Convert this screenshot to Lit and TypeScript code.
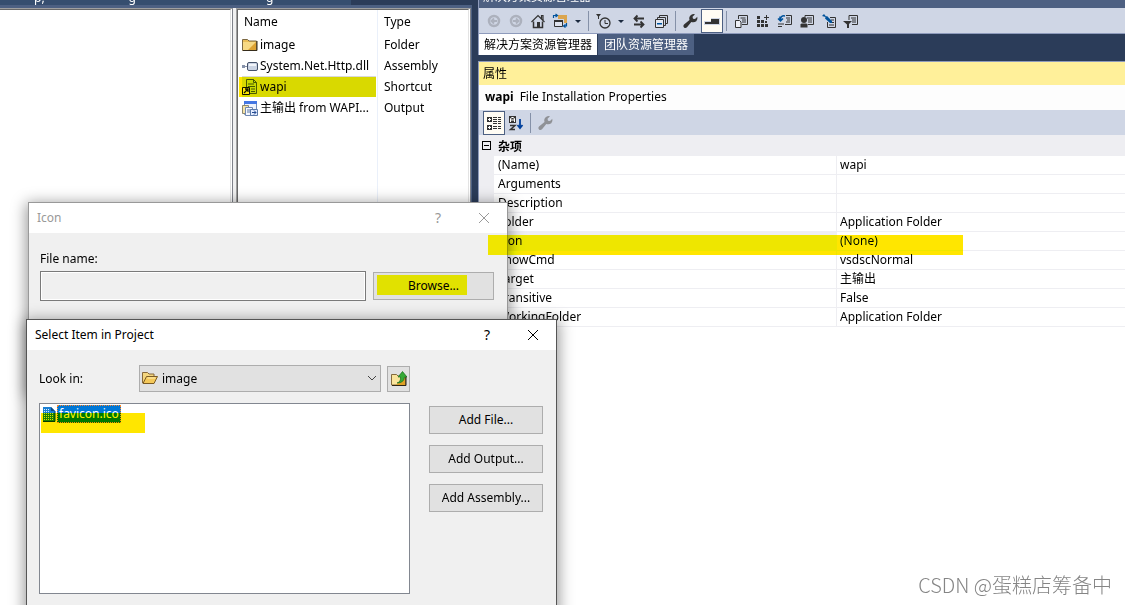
import { LitElement, html, css, svg, nothing, TemplateResult, SVGTemplateResult } from "lit";
import { customElement, property } from "lit/decorators.js";

const glyphs: Record<string, SVGTemplateResult> = {
  back: svg`<circle cx="8" cy="8" r="5" fill="none" stroke="#acb1bd" stroke-width="2.500"/><path d="M11 8H6M8 5.500 5.500 8 8 10.500" fill="none" stroke="#acb1bd" stroke-width="1.800"/>`,
  forward: svg`<circle cx="8" cy="8" r="5" fill="none" stroke="#acb1bd" stroke-width="2.500"/><path d="M5 8h5M8 5.500 10.500 8 8 10.500" fill="none" stroke="#acb1bd" stroke-width="1.800"/>`,
  home: svg`<path d="M1.500 9 8 2.500 14.500 9M11.500 5.500V2.500H13V7" fill="none" stroke="#333" stroke-width="1.200"/><path d="M3.500 8.500V14.500H12.500V8.500" fill="none" stroke="#333" stroke-width="1.500"/><path d="M7 9h3v5H7z" fill="#333"/>`,
  sync: svg`<path d="M6 2h9v8h-3V6H6z" fill="#dba54e"/><path d="M2.500 7.500h8v6h-8z" fill="#dfe3ee" stroke="#333"/><path d="M2 7h9v2H2z" fill="#333"/><path d="M1.500 5V2.500H5M3.500 1l2 1.500-2 1.500M14.500 10v3H12M13.500 11.500l-2 1.500 2 1.500" fill="none" stroke="#00539c" stroke-width="1.200"/>`,
  clock: svg`<circle cx="10" cy="10" r="5" fill="none" stroke="#333" stroke-width="1.300"/><path d="M10 7v3.500h3" fill="none" stroke="#333"/><path d="M1 1h5L4 3.500V6H3V3.500z" fill="#333"/>`,
  swap: svg`<path d="M13 5.500H3.500M6.500 2.500l-3 3 3 3M3 11.500h9.500M9.500 8.500l3 3-3 3" fill="none" stroke="#333" stroke-width="1.800"/>`,
  collapse: svg`<path d="M6.500 5V2.500h8v8H12M4.500 7V4.500h8v8H10" fill="none" stroke="#333"/><path d="M2.500 6.500h8v8h-8z" fill="#e3e7f0" stroke="#333"/><path d="M4 10h5v1.500H4z" fill="#00539c"/>`,
  wrench: svg`<path d="M2 14.500q-1.500-1.500 0-3L7.500 7Q6.500 4 9 2q2-1.500 4-.8L10.500 3.700l.5 2 2 .3 2.300-2.300q.7 2.800-1 4.600Q12 10 9.300 9L5 14.300q-1.500 1.500-3 .2z" fill="currentColor"/>`,
  preview: svg`<path d="M0 8h7V5h9v7H0z" fill="#cfd6e5"/><path d="M1 9h6V6h8v5H7v0H1z" fill="#333"/>`,
  props: svg`<path d="M5.500 6V2.500h9v9H9M7.500 5h5M9 7h4M9 9h4" fill="none" stroke="#333"/><path d="M2.500 7.500h4l1.500 1.500v5.500H2.500z" fill="#eef0f6" stroke="#333"/>`,
  grid: svg`<path d="M2 3h3v3H2zM2 7h3v3H2zM2 11h3v3H2zM6 7h3v3H6zM6 11h3v3H6zM10 11h3v3h-3zM10 8h2v2h-2zM9 4h5v1H9zM11 2h1v5h-1z" fill="#333"/>`,
  undo: svg`<path d="M9 2.500h5.500v9H8M9 5h4M10 7h3M9 9h4" fill="none" stroke="#333"/><path d="M1 11h6M1 13.500h4" stroke="#333"/><path d="M3 3.500V7M1 5.500 3.500 8 6 5.500M3.500 7q0-5 4.500-4" fill="none" stroke="#00539c" stroke-width="1.500"/>`,
  user: svg`<path d="M6 4V2.500h8.500v9H9M8 5h5M9 7h4M9 9h4" fill="none" stroke="#333"/><circle cx="5" cy="7" r="3" fill="#333"/><path d="M1.500 14.500v-3l1-1h5l1 1v3z" fill="#333"/>`,
  dart: svg`<path d="M9 4.500h5.500v10h-8V9M8 12h5M9 9.500h4M10 7h3" fill="none" stroke="#333"/><path d="M1 3l2-2 2 2.500 1-.5 5 5v2H9L4 5.500 4.500 4z" fill="#00539c"/>`,
  filter: svg`<path d="M6 7V2.500h8.500v9H9M8 5h5M9 7h4M9 9h4" fill="none" stroke="#333"/><path d="M0 8h9L6 11v4H4v-3.500z" fill="#333"/>`,
  categories: svg`<path d="M1 2h5v5H1zM1 10h5v5H1z" fill="#333"/><path d="M2 4h3v1H2zM3 3h1v3H3zM2 12h3v1H2zM3 11h1v3H3z" fill="#fff"/><path d="M7 2.500h4M12 2.500h3M7 4.500h4M12 4.500h3M7 6.500h4M12 6.500h3M7 8.500h4M12 8.500h3M7 11.500h4M12 11.500h3M7 13.500h4M12 13.500h3" stroke="#333"/>`,
  sort: svg`<path d="M1 1h7v7H1z" fill="#333"/><path d="M2.500 7V3.500L4 2.500h1l1.500 1V7M2.500 5h4" fill="none" stroke="#fff"/><path d="M2 10.500h5L2.500 14.500H7" fill="none" stroke="#333" stroke-width="1.500"/><path d="M12 4v9M9.500 10l2.500 3 2.500-3" fill="none" stroke="#00409c" stroke-width="1.800"/>`,
  folder: svg`<path d="M.500 2.500h5L7 4h7.500v9.500H.5z" fill="#e9bd57" stroke="#7b6843"/><path d="M1 5h13v8H1z" fill="#f7d984"/><path d="M14 5v8H6z" fill="#dda334"/><path d="M1 13.500h14V4" fill="none" stroke="#362c1b"/>`,
  assembly: svg`<path d="M0 7h3v3H0zM3 8h3v1H3z" fill="#8793ab"/><rect x="5.500" y="4.500" width="10" height="8" rx="1.500" fill="#cbd4e4" stroke="#45526b"/><path d="M7 6h7v2H7z" fill="#f2f5fa"/>`,
  shortcut: svg`<path d="M4.500.500h7l3 3v11h-10z" fill="#c8d8a8" stroke="#4a5b1d"/><path d="M11.500.500v3h3M6 5h6M6 7.500h7M9 10h4M9 12.500h4" fill="none" stroke="#46591c"/><path d="M.500 8.500h7v7h-7z" fill="#fff" stroke="#111"/><path d="M2 14l4-4M3 10h3v3" fill="none" stroke="#111" stroke-width="1.300"/>`,
  output: svg`<path d="M2.500 1.500h12v13h-12z" fill="#eef3fd" stroke="#738ebc"/><path d="M2 1h13v3H2z" fill="#4376e3"/><path d="M.500 5.500h6v8h-6z" fill="#f5e3a7" stroke="#8b8770"/><path d="M3.500 7.500h7v8h-7z" fill="#f5f8ff" stroke="#7088b2"/><path d="M5 10h4M5 12h4" stroke="#58759f"/><path d="M8.500 9.500h7v6h-7z" fill="#e3ecff" stroke="#5a78a8"/><path d="M10 12.500h4M12 10.500l2 2-2 2" fill="none" stroke="#234a91"/>`,
  openFolder: svg`<path d="M.500 13V2.500h5L7 4h5v3" fill="#f4d67f" stroke="#87683a"/><path d="M1 13.500 4.500 6.500H15.500L12 13.500z" fill="#f5c95a" stroke="#7a5a24"/><path d="M5.500 8h8" stroke="#fff0b8"/>`,
  upFolder: svg`<path d="M.500 3.500h5L7 5h7.500v9H.500z" fill="#fae49b" stroke="#846b3d"/><path d="M14 6v8H5z" fill="#dfa125"/><path d="M1 14.500h14V5" fill="none" stroke="#2e2514"/><path d="M6 12q4-1 3.500-6H7l4.500-5.500L16 6h-2.500Q13 12 6 12z" fill="#35a936" stroke="#176d1c" stroke-width=".7"/>`,
  file: svg`<path d="M2 1h8l4 4v11H2z" fill="#1b80d4"/><path d="M10 1v4h4z" fill="#104b80"/><path d="M3 3.500h6M3 5.500h6M3 7.500h10M3 9.500h10M3 11.500h10M3 13.500h10" stroke="#d6efff" stroke-dasharray="1 1"/><path d="M2 15.500h12V5" fill="none" stroke="#073c6c"/>`,
};

const glyph = (name: string) => html`<svg class="glyph" viewBox="0 0 16 16" aria-hidden="true">${glyphs[name]}</svg>`;

const base = css`
  * { box-sizing: border-box; }
  button, input, select { font: inherit; color: inherit; margin: 0; padding: 0; border-radius: 0; }
  .glyph { width: 16px; height: 16px; display: block; flex: none; }
`;

@customElement("tool-strip")
class ToolStrip extends LitElement {
  @property({ attribute: false }) items: string[] = [];
  static styles = [base, css`
    :host { display: flex; align-items: flex-end; height: 25px; background: #cfd6e5; padding-left: 4px; color: #333; overflow: hidden; }
    .tool { width: 22px; height: 24px; border: 1px solid transparent; background: none; display: flex; align-items: center; justify-content: center; flex: none; }
    .on { background: #fffcf4; border-color: #4d6082; }
    .off { color: #8f9196; }
    .caret { width: 14px; height: 24px; border: 0; background: none; display: grid; place-items: center; flex: none; }
    .caret::before { content: ""; border: 3px solid transparent; border-top-color: #1b293e; border-bottom: 0; }
    .sep { width: 1px; height: 20px; background: #8591a8; margin: 0 3px 2px; flex: none; }
  `];
  private item(entry: string): TemplateResult {
    if (entry === "|") return html`<span class="sep"></span>`;
    if (entry === "v") return html`<button class="caret" aria-label="more"></button>`;
    const [name, state = ""] = entry.split(":");
    return html`<button class="tool ${state}" aria-label=${name}>${glyph(name)}</button>`;
  }
  render() { return this.items.map((i) => this.item(i)); }
}

@customElement("dialog-frame")
class DialogFrame extends LitElement {
  @property() caption = "";
  static styles = [base, css`
    :host { display: block; background: #f0f0f0; border: 1px solid #555; box-shadow: 0 3px 14px 2px rgba(0, 0, 0, 0.4); }
    .bar { display: flex; align-items: center; height: 30px; background: #fff; padding-left: 8px; }
    .caption { flex: 1; font: inherit; margin: 0; }
    .ctl { width: 46px; height: 30px; border: 0; background: none; display: grid; place-items: center; font-size: 14px; }
    .cross { width: 12px; height: 12px; stroke: currentColor; fill: none; }
  `];
  render() {
    return html`<header class="bar"><h2 class="caption">${this.caption}</h2>
      <button class="ctl" aria-label="Help">?</button>
      <button class="ctl" aria-label="Close"><svg class="cross" viewBox="0 0 12 12"><path d="M1 1 11 11M11 1 1 11"/></svg></button>
      </header><slot></slot>`;
  }
}

@customElement("app-root")
class AppRoot extends LitElement {
  private files = [
    ["folder", "image", "Folder"],
    ["assembly", "System.Net.Http.dll", "Assembly"],
    ["shortcut", "wapi", "Shortcut"],
    ["output", "主输出 from WAPI...", "Output"],
  ];
  private props = [
    ["(Name)", "wapi"], ["Arguments", ""], ["Description", ""], ["Folder", "Application Folder"],
    ["Icon", "(None)"], ["ShowCmd", "vsdscNormal"], ["Target", "主输出"], ["Transitive", "False"],
    ["WorkingFolder", "Application Folder"],
  ];
  private explorerTools = ["back", "forward", "home", "sync", "v", "|", "clock", "v", "swap", "collapse", "|", "wrench", "preview:on", "|", "props", "grid", "undo", "user", "dart", "filter"];
  private propertyTools = ["categories:on", "sort", "|", "wrench:off"];

  static styles = [base, css`
    :host { display: block; position: relative; height: 100vh; overflow: hidden; background: #2b3c59; color: #000;
      font: 12px/18px "Noto Sans", "Noto Sans CJK SC", sans-serif; }
    .shell { display: grid; grid-template-columns: 472px minmax(0, 1fr); gap: 6px; height: 100%; }
    .editor { display: flex; flex-direction: column; min-width: 0; }
    .doc-tabs { display: flex; align-items: flex-end; gap: 84px; height: 5px; width: 351px; padding-left: 34px; background: #364e6f; color: #fff; overflow: hidden; line-height: 14px; }
    .gap-wide { margin-left: 46px; }
    .panes { flex: 1; display: grid; grid-template-columns: 233px minmax(0, 1fr); gap: 3px; background: #f0f0f0; border-top: 3px solid #4d6082; border-right: 1px solid #4d6082; }
    .pane { background: #fff; border-top: 1px solid #a0a0a0; border-right: 1px solid #7f828a; padding-right: 1px; }
    .pane-in { height: 100%; border-top: 1px solid #696969; border-right: 1px solid #e3e3e3; }
    .framed { border-left: 1px solid #a0a0a0; }
    .framed .pane-in { border-left: 1px solid #696969; }
    table { border-collapse: separate; border-spacing: 0; table-layout: fixed; width: 100%; }
    th, td { padding: 0; text-align: left; font-weight: 400; white-space: nowrap; }
    .files { height: 100%; }
    .files th { height: 24px; padding-left: 6px; }
    .files td { height: 21px; padding-left: 6px; }
    .files .c1 { width: 140px; border-right: 1px solid #eaf0fa; }
    .files td.c1 { padding-left: 4px; }
    .cell { display: flex; align-items: center; gap: 2px; height: 21px; }
    .picked { position: relative; background: #d9d9d9; width: 134px; }
    .filler td { height: auto; }
    .mark { position: absolute; background: #ffe600; mix-blend-mode: darken; pointer-events: none; }
    .mark-file { left: -3px; right: 0; top: 1px; height: 20px; }

    .side { display: flex; flex-direction: column; min-width: 0; }
    .explorer { border-left: 1px solid #8e9bbc; }
    .explorer-title { height: 8px; background: #4d6082; color: #fff; padding-left: 4px; overflow: hidden; display: flex; align-items: flex-end; line-height: 22px; }
    .side-tabs { display: flex; gap: 1px; height: 22px; border-top: 1px solid #8e9bbc; }
    .side-tab { border: 0; background: #4d6082; color: #fff; padding: 0 6px; height: 21px; line-height: 20px; }
    .active { background: #fff; color: #000; padding: 0 5px; }
    .properties { margin-top: 6px; flex: 1; background: #fff; border-left: 1px solid #8e9bbc; border-top: 1px solid #8e9bbc; }
    .prop-title { margin: 0; font: inherit; height: 23px; line-height: 24px; padding-left: 4px; background: #fff09a; }
    .object { height: 25px; line-height: 24px; padding-left: 6px; background: #fdfdfd; }
    .object b { margin-right: 6px; }
    .grid .gut { width: 15px; background: #eeeef2; border: 0; }
    .grid .name { width: 343px; }
    .grid td, .grid .name { line-height: 18px; height: 19px; border-bottom: 1px solid #eeeef2; }
    .grid .name { padding-left: 4px; border-right: 1px solid #eeeef2; }
    .grid .value { padding-left: 3px; }
    .grid .group th { background: #eeeef2; height: 21px; font-weight: 700; padding: 2px 0 0 4px; }
    .grid .group .gut { padding: 0 0 0 3px; }
    .grid .chosen .name { background: #eeeef2; }
    .toggle { display: block; width: 9px; height: 9px; border: 1px solid #000; background: linear-gradient(#000, #000) center / 5px 1px no-repeat; }

    .dlg { position: absolute; }
    .dlg-icon { left: 28px; top: 202px; width: 480px; height: 190px; border-color: #999; }
    .dim { color: #999; }
    .dim > * { color: #000; }
    .icon-form { display: grid; grid-template-columns: minmax(0, 1fr) 121px; column-gap: 7px; align-items: center; padding: 17px 13px 0 11px; }
    .icon-form label { grid-column: 1 / -1; margin-bottom: 3px; }
    .field { width: 100%; height: 30px; border: 1px solid #7a7a7a; background: #f0f0f0; box-shadow: inset 0 0 0 1px #fff; }
    .push { width: 100%; height: 28px; border: 1px solid #adadad; background: #e1e1e1; position: relative; }
    .mark-browse { left: 3px; top: 2px; width: 90px; height: 20px; }
    .dlg-pick { left: 26px; top: 319px; width: 531px; height: 320px; }
    .pick { display: grid; grid-template-columns: 371px minmax(0, 1fr); gap: 11px 19px; padding: 15px 13px 0 12px; }
    .look { display: grid; grid-template-columns: 94px minmax(0, 1fr) 23px; column-gap: 6px; align-items: center; }
    .combo { position: relative; height: 27px; }
    .combo select { width: 100%; height: 27px; appearance: none; border: 1px solid #adadad; background: #e1e1e1; padding-left: 22px; }
    .combo .glyph { position: absolute; left: 3px; top: 5px; pointer-events: none; }
    .combo .chev { position: absolute; right: 4px; top: 10px; width: 10px; height: 7px; fill: none; stroke: #444; pointer-events: none; }
    .up { width: 23px; height: 26px; border: 1px solid #adadad; background: #e1e1e1; display: grid; place-items: center; }
    .list { grid-column: 1; height: 191px; border: 1px solid #828790; background: #fff; padding: 1px; position: relative; }
    .entry { display: flex; align-items: center; }
    .entry-name { height: 18px; line-height: 16px; padding: 0 1px; border: 1px dotted #ff8728; background: #0078d7; color: #fff; }
    .mark-entry { left: 1px; top: 9px; width: 104px; height: 20px; }
    .actions { grid-column: 2; display: flex; flex-direction: column; gap: 11px; padding-top: 3px; }
    .mark-row { left: 488px; top: 235px; width: 475px; height: 20px; }
    .watermark { position: absolute; right: 13px; bottom: 6px; font: 300 20px/28px "Noto Sans CJK SC", sans-serif; color: #858585; }
  `];

  render() {
    return html`
      <div class="shell">
        <main class="editor">
          <div class="doc-tabs"><span>p,</span><span>g</span><span class="gap-wide">g</span></div>
          <div class="panes">
            <div class="pane"><div class="pane-in"></div></div>
            <div class="pane framed"><div class="pane-in">
              <table class="files">
                <tr><th class="c1">Name</th><th>Type</th></tr>
                ${this.files.map(([icon, name, type]) => html`<tr>
                  <td class="c1"><div class="cell ${name === "wapi" ? "picked" : ""}">${glyph(icon)}<span>${name}</span>${name === "wapi" ? html`<span class="mark mark-file"></span>` : nothing}</div></td>
                  <td>${type}</td></tr>`)}
                <tr class="filler"><td class="c1"></td><td></td></tr>
              </table>
            </div></div>
          </div>
        </main>
        <aside class="side">
          <section class="explorer">
            <div class="explorer-title">解决方案资源管理器</div>
            <tool-strip .items=${this.explorerTools}></tool-strip>
            <nav class="side-tabs"><button class="side-tab active">解决方案资源管理器</button><button class="side-tab">团队资源管理器</button></nav>
          </section>
          <section class="properties">
            <h2 class="prop-title">属性</h2>
            <div class="object"><b>wapi</b>File Installation Properties</div>
            <tool-strip .items=${this.propertyTools}></tool-strip>
            <table class="grid">
              <colgroup><col class="gut"><col class="name"><col></colgroup>
              <tr class="group"><th class="gut"><span class="toggle"></span></th><th colspan="2">杂项</th></tr>
              ${this.props.map(([k, v]) => html`<tr class=${k === "Icon" ? "chosen" : ""}><th class="gut"></th><th class="name">${k}</th><td class="value">${v}</td></tr>`)}
            </table>
          </section>
        </aside>
      </div>
      <dialog-frame class="dlg dlg-icon dim" caption="Icon">
        <div class="icon-form">
          <label for="file">File name:</label>
          <input id="file" class="field" type="text">
          <button class="push">Browse...<span class="mark mark-browse"></span></button>
        </div>
      </dialog-frame>
      <dialog-frame class="dlg dlg-pick" caption="Select Item in Project">
        <div class="pick">
          <div class="look">
            <label for="look">Look in:</label>
            <div class="combo"><select id="look"><option>image</option></select>${glyph("openFolder")}
              <svg class="chev" viewBox="0 0 10 7"><path d="M1 1 5 5 9 1"/></svg></div>
            <button class="up" aria-label="Up one level">${glyph("upFolder")}</button>
          </div>
          <div class="list"><div class="entry">${glyph("file")}<span class="entry-name">favicon.ico</span></div><span class="mark mark-entry"></span></div>
          <div class="actions">
            <button class="push">Add File...</button>
            <button class="push">Add Output...</button>
            <button class="push">Add Assembly...</button>
          </div>
        </div>
      </dialog-frame>
      <span class="mark mark-row"></span>
      <div class="watermark">CSDN @蛋糕店筹备中</div>`;
  }
}
